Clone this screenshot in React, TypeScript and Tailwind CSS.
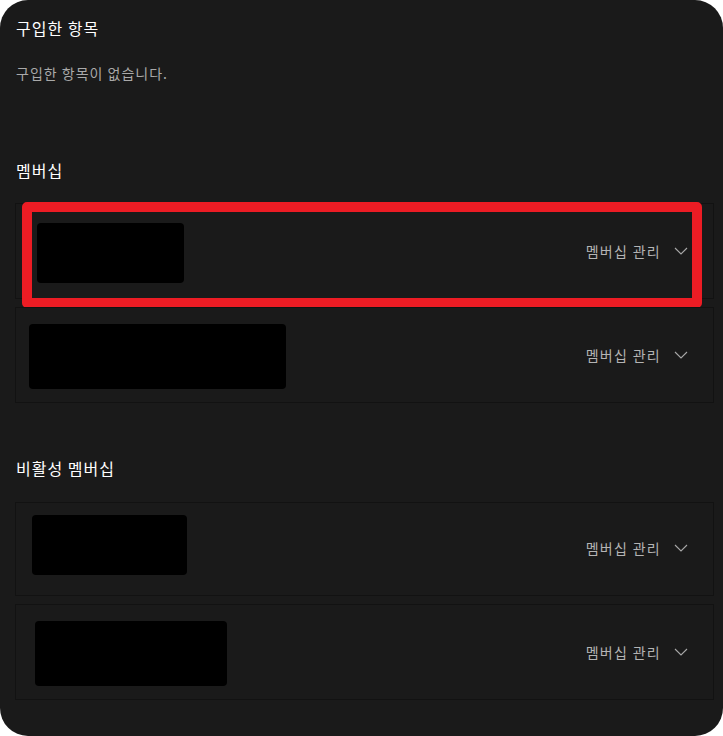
import React from "react";

function Chevron() {
  return (
    <svg width="14" height="8" viewBox="0 0 14 8" fill="none" className="block">
      <path d="M1 1 L7 7 L13 1" stroke="#a8a8a8" strokeWidth="1.1" />
    </svg>
  );
}

function Card({
  h,
  rectW,
  rectH,
  rectL,
  rectT,
  textY,
  children,
}: {
  h: number;
  rectW: number;
  rectH: number;
  rectL: number;
  rectT: number;
  textY: number;
  children?: React.ReactNode;
}) {
  return (
    <div
      className="relative w-[699px] border border-[#121212] bg-[#1a1a1a]"
      style={{ height: h }}
    >
      <div
        className="absolute rounded-[4px] bg-black"
        style={{ left: rectL, top: rectT, width: rectW, height: rectH }}
      />
      <div
        className="absolute right-[25px] flex items-center"
        style={{ top: textY - 11 }}
      >
        <span className="text-[14px] leading-[20px] tracking-[1.3px] text-[#b4b4b4]">멤버십 관리</span>
        <span className="ml-[13px]">
          <Chevron />
        </span>
      </div>
      {children}
    </div>
  );
}

export default function App() {
  return (
    <div className="w-[723px] h-[736px] bg-white">
      <div
        className="w-[723px] h-[736px] rounded-[28px] bg-[#1a1a1a] pl-[15px] pt-[16px]"
        style={{ fontFamily: '"Noto Sans CJK KR", "Noto Sans", sans-serif' }}
      >
        <div className="pl-[1px] text-[16px] leading-[24px] tracking-[1px] text-white">구입한 항목</div>
        <div className="mt-[23px] pl-[1px] text-[14px] leading-[20px] tracking-[1px] text-[#a9a9a9]">
          구입한 항목이 없습니다.
        </div>
        <div className="mt-[75px] pl-[1px] text-[16px] leading-[24px] tracking-[1px] text-white">멤버십</div>
        <div className="mt-[21px] flex flex-col gap-[8px]">
          <Card h={96} rectW={147} rectH={60} rectL={21} rectT={19} textY={48}>
            <div className="absolute left-[6px] top-[-2px] h-[106px] w-[680px] rounded-[5px] border-[10px] border-[#ed1c24]" />
          </Card>
          <Card h={96} rectW={257} rectH={65} rectL={13} rectT={16} textY={48} />
        </div>
        <div className="mt-[53px] pl-[1px] text-[16px] leading-[24px] tracking-[1px] text-white">비활성 멤버십</div>
        <div className="mt-[22px] flex flex-col gap-[8px]">
          <Card h={94} rectW={155} rectH={60} rectL={16} rectT={12} textY={46} />
          <Card h={96} rectW={192} rectH={65} rectL={19} rectT={16} textY={48} />
        </div>
      </div>
    </div>
  );
}
